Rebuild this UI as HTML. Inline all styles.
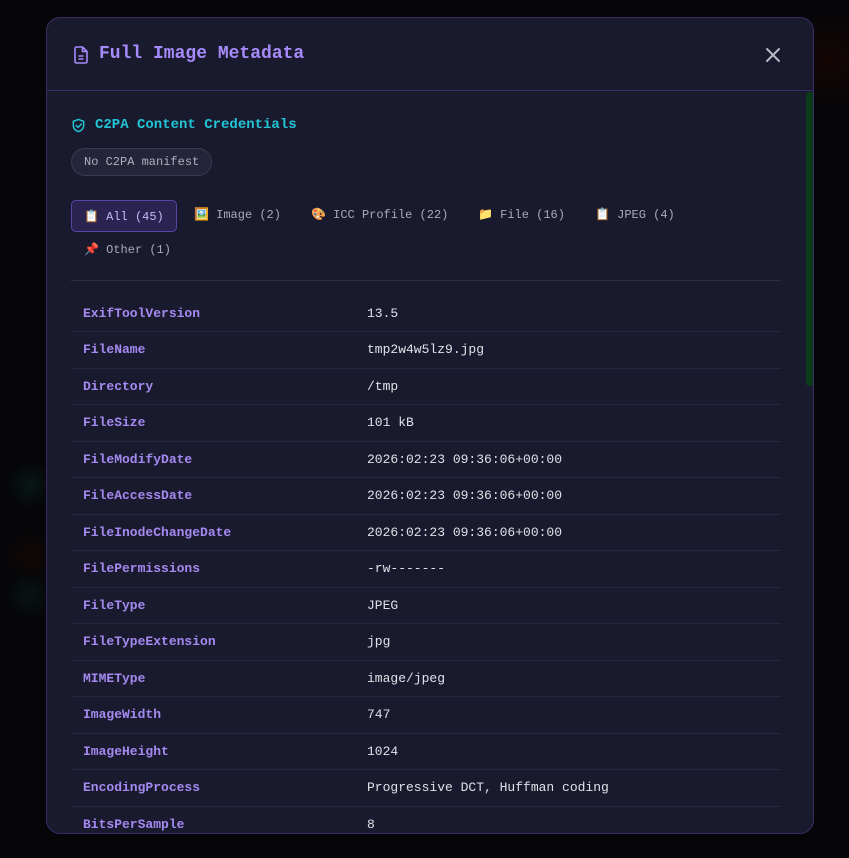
<!DOCTYPE html>
<html><head><meta charset="utf-8"><style>
*{margin:0;padding:0;box-sizing:border-box}
body{width:849px;height:858px;background:#060508;overflow:hidden;position:relative;font-family:"Liberation Mono",monospace}
.bg1{position:absolute;left:0;top:0;width:849px;height:858px;background:radial-gradient(circle at 830px 60px,#140605 0,transparent 50px),radial-gradient(circle at 30px 485px,#081616 0,transparent 25px),radial-gradient(circle at 30px 595px,#081412 0,transparent 25px),radial-gradient(circle at 30px 555px,#120806 0,transparent 25px)}
.modal{position:absolute;left:46px;top:17px;width:768px;height:817px;background:#1a1a2e;border:1px solid #3a2d66;border-radius:14px;overflow:hidden}
.hdr{height:73px;border-bottom:1px solid #3a2d66;position:relative}
.title{position:absolute;left:52px;top:26px;font-size:18px;font-weight:bold;color:#a78bfa}
.ticon{position:absolute;left:26px;top:28px}
.close{position:absolute;left:717px;top:28px}
.sb{position:absolute;left:759px;top:74px;width:8px;height:294px;background:#0c3b1a;border-radius:3px}
.c2{position:absolute;left:48px;top:99px;font-size:14px;font-weight:bold;color:#22c5d6}
.c2i{position:absolute;left:24px;top:100px}
.pill{position:absolute;left:24px;top:130px;height:28px;width:141px;border:1px solid #3b3b50;background:#24243a;border-radius:14px;color:#aeb0bc;font-size:12px;line-height:26px;padding-left:12px}
.tab{position:absolute;font-size:12px;color:#a8aab8;line-height:32px;height:32px;white-space:nowrap}
.tab.a{border:1px solid #5b43a8;background:#2c2450;border-radius:5px;color:#c7b8f5;padding:0 12px}
.sep{position:absolute;left:24px;top:262px;width:710px;height:1px;background:#2e2e44}
table{position:absolute;left:24px;top:277px;width:710px;border-collapse:collapse;font-size:13px}
td{height:36.5px;border-bottom:1px solid #262640;padding:0 12px;vertical-align:middle}
td.k{color:#a48af0;font-weight:bold;width:284px}
td.v{color:#e0e0e8}
</style></head><body>
<div class="bg1"></div>
<div class="modal">
<div class="hdr">
<svg class="ticon" width="16" height="18" viewBox="0 0 16 18" fill="none" stroke="#a78bfa" stroke-width="1.6" stroke-linejoin="round"><path d="M2 2.5a1.5 1.5 0 0 1 1.5-1.5H9.5L14 5.5V15.5a1.5 1.5 0 0 1-1.5 1.5h-9A1.5 1.5 0 0 1 2 15.5z"/><path d="M9.5 1v4.5H14M5.5 10h5M5.5 13h5"/></svg>
<div class="title">Full Image Metadata</div>
<svg class="close" width="18" height="18" viewBox="0 0 18 18" stroke="#b8bac4" stroke-width="2" stroke-linecap="round"><path d="M3 3l12 12M15 3L3 15"/></svg>
</div>
<div class="sb"></div>
<svg class="c2i" width="15" height="15" viewBox="0 0 16 16" fill="none" stroke="#22c5d6" stroke-width="1.6" stroke-linejoin="round" stroke-linecap="round"><path d="M8 1.5l5.5 2v4.5c0 3.5-2.5 5.5-5.5 6.5C5 13.5 2.5 11.5 2.5 8V3.5z"/><path d="M5.5 8l2 2 3.5-3.5"/></svg>
<div class="c2">C2PA Content Credentials</div>
<div class="pill">No C2PA manifest</div>
<div class="tab a" style="left:24px;top:182px">📋 All (45)</div>
<div class="tab" style="left:147px;top:181px">🖼️ Image (2)</div>
<div class="tab" style="left:264px;top:181px">🎨 ICC Profile (22)</div>
<div class="tab" style="left:431px;top:181px">📁 File (16)</div>
<div class="tab" style="left:548px;top:181px">📋 JPEG (4)</div>
<div class="tab" style="left:37px;top:216px">📌 Other (1)</div>
<div class="sep"></div>
<table>
<tr><td class="k">ExifToolVersion</td><td class="v">13.5</td></tr>
<tr><td class="k">FileName</td><td class="v">tmp2w4w5lz9.jpg</td></tr>
<tr><td class="k">Directory</td><td class="v">/tmp</td></tr>
<tr><td class="k">FileSize</td><td class="v">101 kB</td></tr>
<tr><td class="k">FileModifyDate</td><td class="v">2026:02:23 09:36:06+00:00</td></tr>
<tr><td class="k">FileAccessDate</td><td class="v">2026:02:23 09:36:06+00:00</td></tr>
<tr><td class="k">FileInodeChangeDate</td><td class="v">2026:02:23 09:36:06+00:00</td></tr>
<tr><td class="k">FilePermissions</td><td class="v">-rw-------</td></tr>
<tr><td class="k">FileType</td><td class="v">JPEG</td></tr>
<tr><td class="k">FileTypeExtension</td><td class="v">jpg</td></tr>
<tr><td class="k">MIMEType</td><td class="v">image/jpeg</td></tr>
<tr><td class="k">ImageWidth</td><td class="v">747</td></tr>
<tr><td class="k">ImageHeight</td><td class="v">1024</td></tr>
<tr><td class="k">EncodingProcess</td><td class="v">Progressive DCT, Huffman coding</td></tr>
<tr><td class="k">BitsPerSample</td><td class="v">8</td></tr>
</table>
</div>
</body></html>
